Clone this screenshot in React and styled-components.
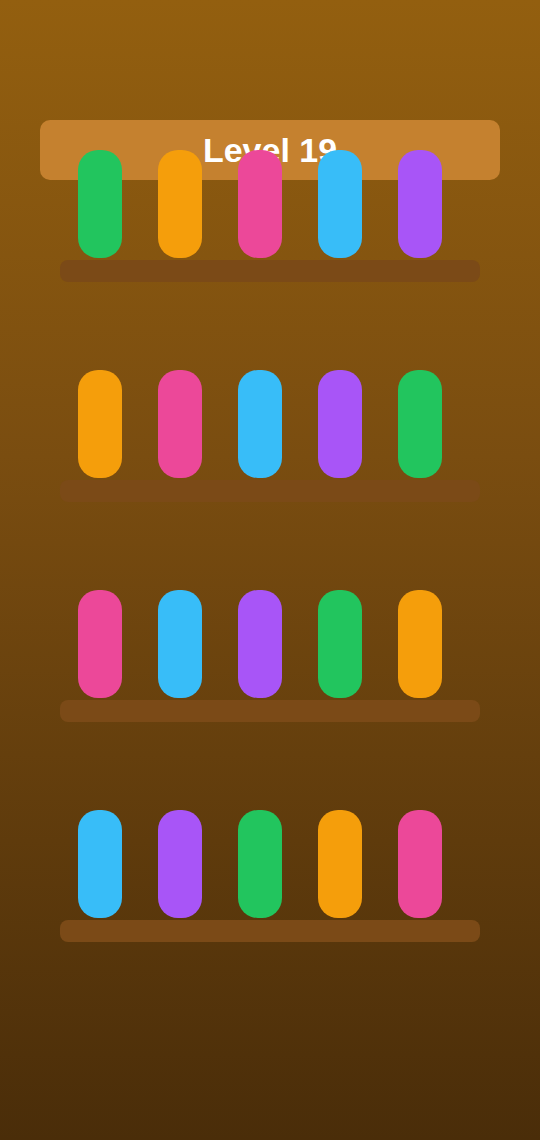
import React from 'react';
import styled, { createGlobalStyle } from 'styled-components';

const GlobalStyle = createGlobalStyle`
    * { box-sizing: border-box; }
    html, body {
        margin: 0;
        padding: 0;
        font-family: "Liberation Sans", Arial, sans-serif;
    }
`;

const Screen = styled.div`
    width: 540px;
    min-height: 1140px;
    padding: 120px 40px 0;
    background: linear-gradient(to bottom, #935f0f 0%, #7a4d10 40%, #4a2d09 100%);
`;

const LevelBar = styled.div`
    height: 60px;
    margin-bottom: -30px;
    border-radius: 10px;
    background-color: #c5812f;
    display: flex;
    align-items: center;
    justify-content: center;
    color: #ffffff;
    font-size: 34px;
    font-weight: 700;
`;

const Shelves = styled.div`
    display: flex;
    flex-flow: column;
    row-gap: 88px;
    padding: 0 20px;
`;

const ShelfRow = styled.div`
    position: relative;
    display: flex;
    flex-flow: column;
    row-gap: 2px;
`;

const Pills = styled.div`
    display: flex;
    column-gap: 36px;
    padding-left: 18px;
`;

const Pill = styled.div`
    width: 44px;
    height: 108px;
    border-radius: 20px;
    background-color: ${props => props.$color};
`;

const Plank = styled.div`
    height: 22px;
    border-radius: 8px;
    background-color: #7b4a17;
`;

const colors = {
    green: '#22c55e',
    orange: '#f59e0b',
    pink: '#ec4899',
    sky: '#38bdf8',
    purple: '#a855f7',
};

const rows = [
    ['green', 'orange', 'pink', 'sky', 'purple'],
    ['orange', 'pink', 'sky', 'purple', 'green'],
    ['pink', 'sky', 'purple', 'green', 'orange'],
    ['sky', 'purple', 'green', 'orange', 'pink'],
];

function App() {
    return (
        <Screen>
            <GlobalStyle />
            <LevelBar>Level 19</LevelBar>
            <Shelves>
                {rows.map((row, i) => (
                    <ShelfRow key={i}>
                        <Pills>
                            {row.map((c, j) => <Pill key={j} $color={colors[c]} />)}
                        </Pills>
                        <Plank />
                    </ShelfRow>
                ))}
            </Shelves>
        </Screen>
    );
}

export default App;
